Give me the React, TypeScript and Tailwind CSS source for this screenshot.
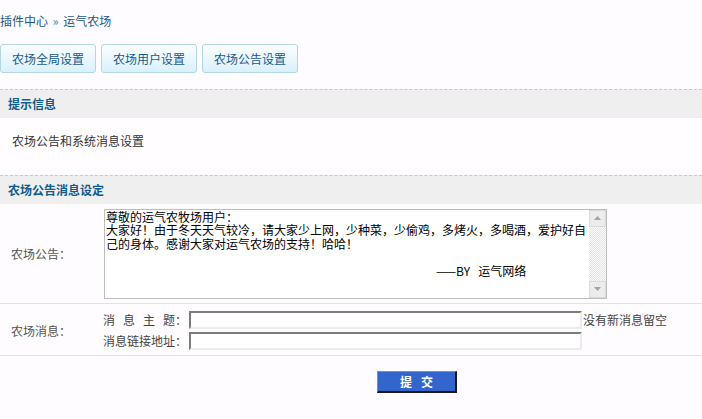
import React from 'react';

const NOTICE =
  '尊敬的运气农牧场用户：\n大家好！由于冬天天气较冷，请大家少上网，少种菜，少偷鸡，多烤火，多喝酒，爱护好自己的身体。感谢大家对运气农场的支持！哈哈！\n\n' +
  '\u3000'.repeat(27) +
  '\u2002——BY   运气网络';

const TABS = ['农场全局设置', '农场用户设置', '农场公告设置'];

function SectionTitle({ children }: { children: React.ReactNode }) {
  return (
    <div className="flex h-[29px] items-center border-t border-dashed border-[#c9c9c9] bg-[#efefef] pl-[8px] font-bold text-[#0e5d8e]">
      {children}
    </div>
  );
}

function Arrow({ up }: { up?: boolean }) {
  return (
    <div className="flex h-[17px] w-full items-center justify-center border border-[#dadada] bg-[#ececec]">
      <svg width="7" height="4" viewBox="0 0 7 4">
        <path d={up ? 'M0 4 L3.5 0 L7 4 Z' : 'M0 0 L3.5 4 L7 0 Z'} fill="#a3a3a3" />
      </svg>
    </div>
  );
}

function TextInput() {
  return (
    <input
      className="h-[18px] w-[393px] border-2 border-t-[#7c7c7c] border-l-[#7c7c7c] border-r-[#ececec] border-b-[#ececec] bg-white px-[2px] text-[12px] outline-none"
      defaultValue=""
    />
  );
}

export default function App() {
  return (
    <div className="min-h-screen bg-[#fefcfe] font-['Noto_Sans_CJK_SC','Liberation_Sans',sans-serif] text-[12px] leading-[14px] text-[#333]">
      <div className="h-[44px] pt-[14px] text-[#1d5883]">
        插件中心 <span className="mx-[2px] text-[#5a7a95]">»</span> 运气农场
      </div>

      <div className="flex h-[29px] gap-[5px]">
        {TABS.map((t) => (
          <button
            key={t}
            className="h-[29px] w-[96px] rounded-[3px] border border-[#b3d6e6] bg-linear-to-b from-[#fbfeff] to-[#d9f1fb] text-[12px] text-[#1a5a8a]"
          >
            {t}
          </button>
        ))}
      </div>

      <div className="mt-[16px]">
        <SectionTitle>提示信息</SectionTitle>
        <div className="h-[57px] bg-[#fffdff] pl-[12px] pt-[16px]">农场公告和系统消息设置</div>
        <SectionTitle>农场公告消息设定</SectionTitle>
      </div>

      <div className="flex h-[100px] items-center border-b border-[#e2e2e2]">
        <div className="w-[104px] pl-[11px] text-[#555]">农场公告：</div>
        <div className="flex h-[90px] w-[503px] border border-[#bdbdbd] bg-white">
          <textarea
            className="h-full flex-1 resize-none overflow-hidden bg-white pl-[1px] pt-0 text-[12px] leading-[13.6px] text-black outline-none"
            defaultValue={NOTICE}
          />
          <div className="flex w-[17px] flex-col">
            <Arrow up />
            <div className="flex-1 bg-[repeating-conic-gradient(#e4e4e4_0_25%,#fbfbfb_0_50%)] bg-[length:2px_2px]" />
            <Arrow />
          </div>
        </div>
      </div>

      <div className="flex items-center border-b border-[#e2e2e2] pb-[5px] pt-[7px]">
        <div className="w-[101px] pl-[11px] text-[#555]">农场消息：</div>
        <div className="flex flex-col gap-[3px]">
          <div className="flex items-center">
            <div className="w-[88px] whitespace-nowrap pr-[2px] text-right text-[#444]">
              <span className="tracking-[8px]">消息主</span>题：
            </div>
            <TextInput />
            <span className="ml-[1px] whitespace-nowrap text-[#444]">没有新消息留空</span>
          </div>
          <div className="flex items-center">
            <div className="w-[88px] whitespace-nowrap pr-[2px] text-right text-[#444]">消息链接地址：</div>
            <TextInput />
          </div>
        </div>
      </div>

      <div className="pl-[377px] pt-[15px]">
        <button className="h-[22px] w-[80px] border-b-2 border-r-2 border-l border-t border-b-[#1a1a1a] border-r-[#1a1a1a] border-l-[#6a8fe0] border-t-[#6a8fe0] bg-[#3366cc] text-[12px] font-bold text-white">
          提<span className="inline-block w-[9px]" />交
        </button>
      </div>
    </div>
  );
}
